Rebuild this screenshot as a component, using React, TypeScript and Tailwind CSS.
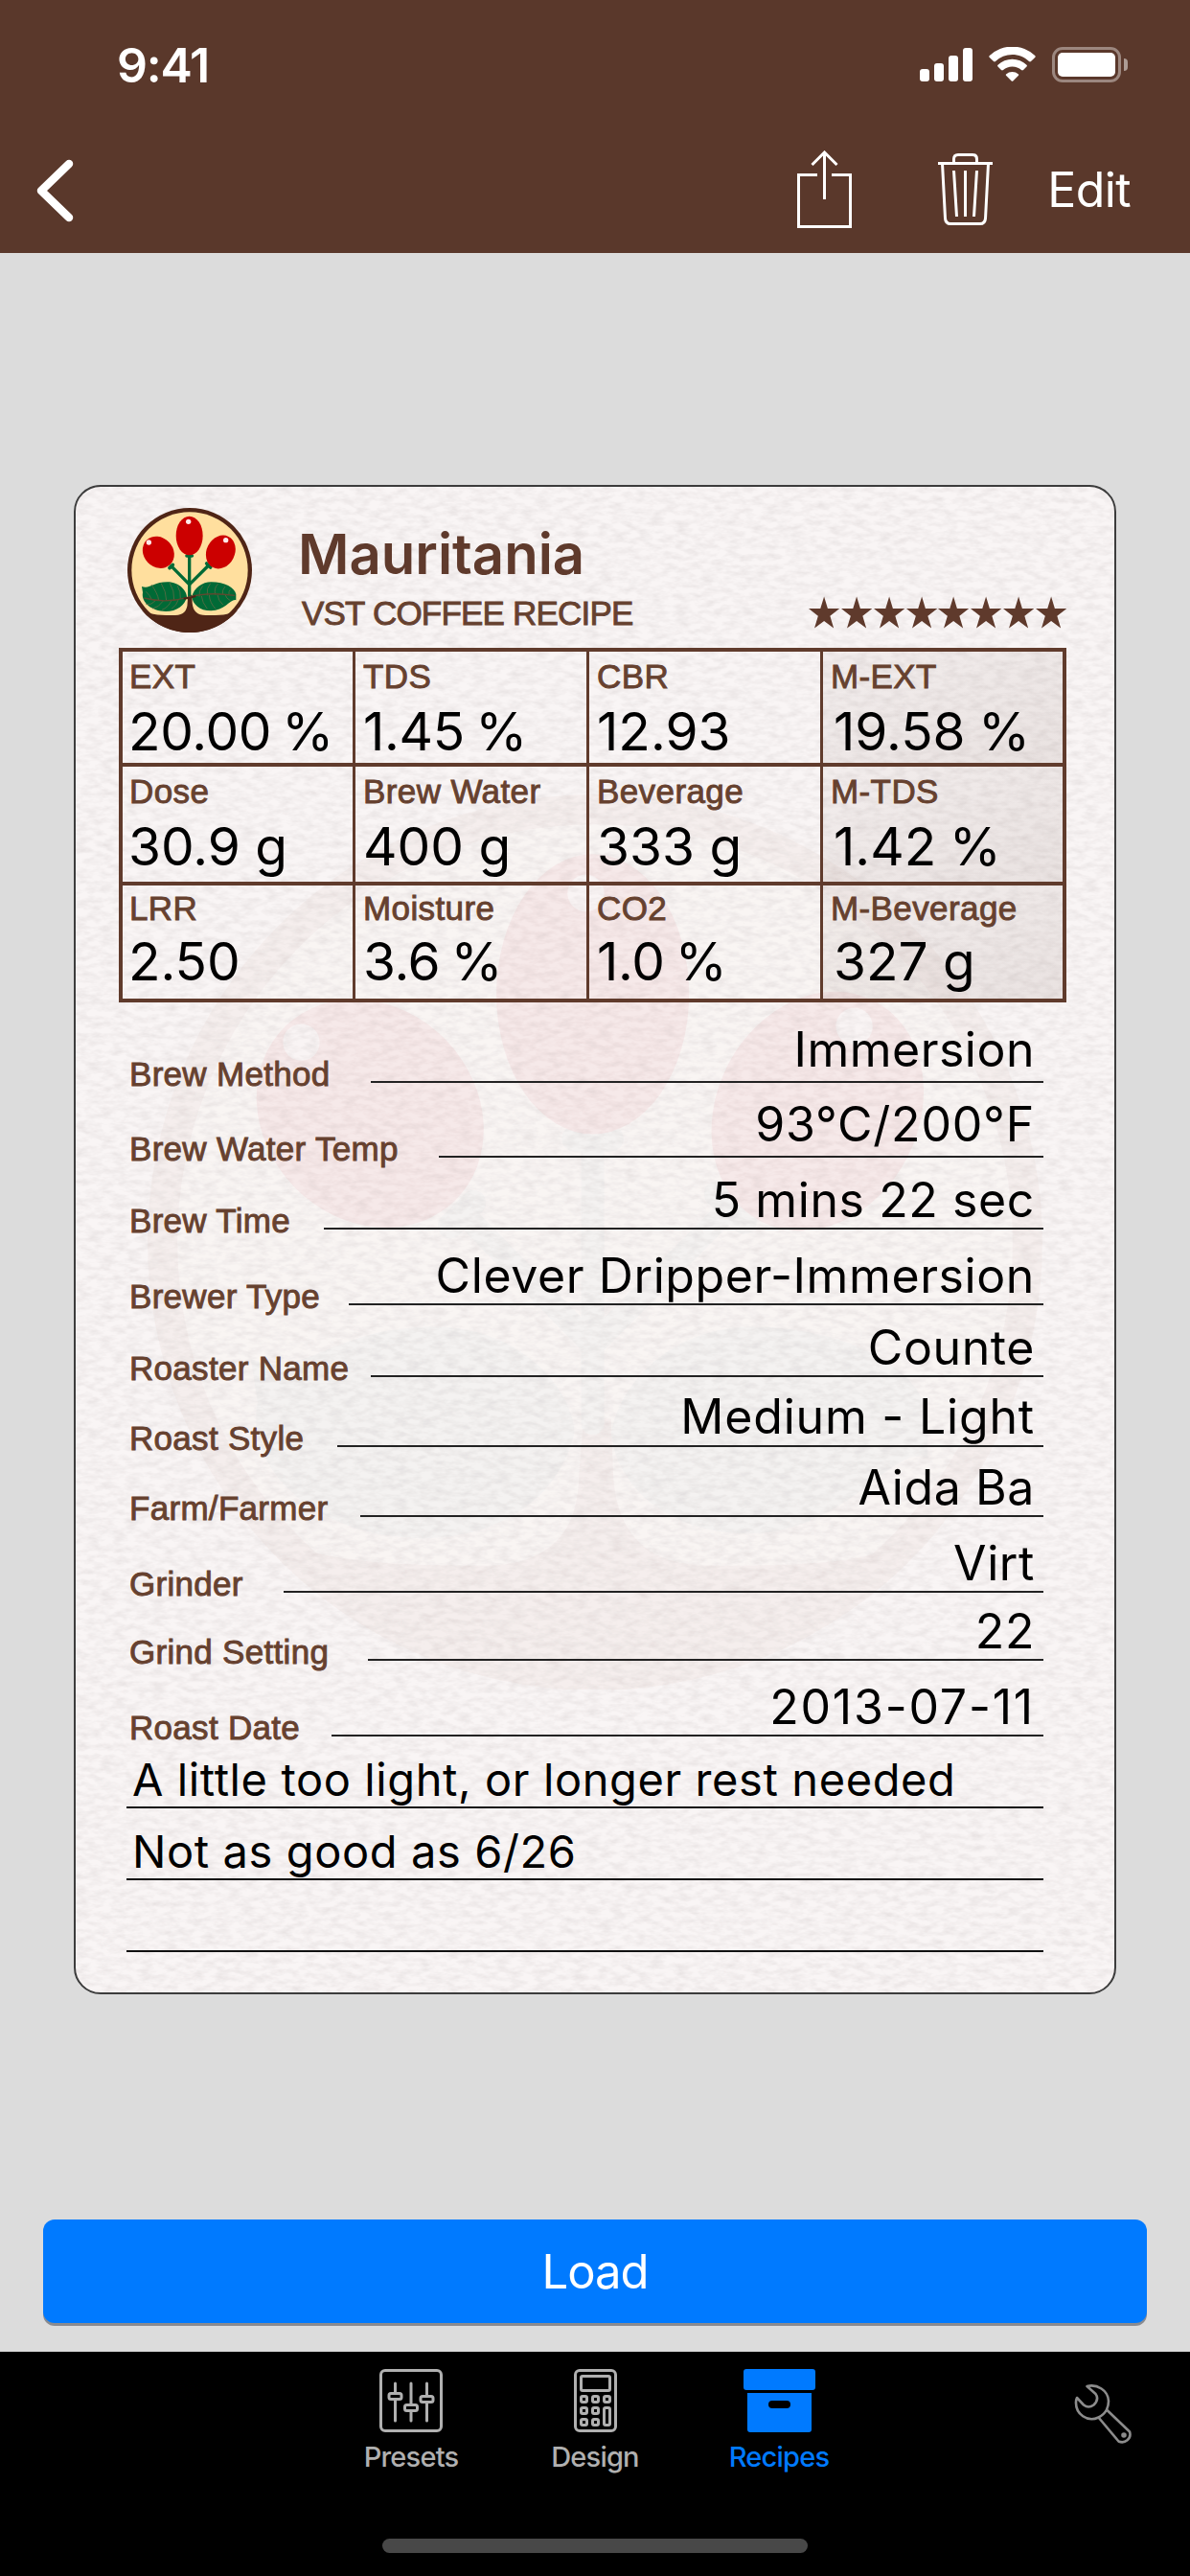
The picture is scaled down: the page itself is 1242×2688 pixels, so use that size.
import type { ReactNode } from 'react';
import clsx from 'clsx';

interface Metric {
  label: string;
  value: string;
}

interface Detail {
  label: string;
  value: string;
  row: string;
  labelWidth: string;
  valueClass?: string;
}

const METRICS: Metric[][] = [
  [
    { label: 'EXT', value: '20.00 %' },
    { label: 'TDS', value: '1.45 %' },
    { label: 'CBR', value: '12.93' },
    { label: 'M-EXT', value: '19.58 %' },
  ],
  [
    { label: 'Dose', value: '30.9 g' },
    { label: 'Brew Water', value: '400 g' },
    { label: 'Beverage', value: '333 g' },
    { label: 'M-TDS', value: '1.42 %' },
  ],
  [
    { label: 'LRR', value: '2.50' },
    { label: 'Moisture', value: '3.6 %' },
    { label: 'CO2', value: '1.0 %' },
    { label: 'M-Beverage', value: '327 g' },
  ],
];

const DETAILS: Detail[] = [
  { label: 'Brew Method', value: 'Immersion', row: 'h-[84px]', labelWidth: 'w-[252px]', valueClass: 'pb-2 tracking-[0.5px]' },
  { label: 'Brew Water Temp', value: '93°C/200°F', row: 'h-[78px]', labelWidth: 'w-[323px]', valueClass: 'pb-2 tracking-[0.800px]' },
  { label: 'Brew Time', value: '5 mins 22 sec', row: 'h-[75px]', labelWidth: 'w-[203px]' },
  { label: 'Brewer Type', value: 'Clever Dripper-Immersion', row: 'h-[79px]', labelWidth: 'w-[229px]' },
  { label: 'Roaster Name', value: 'Counte', row: 'h-[75px]', labelWidth: 'w-[252px]' },
  { label: 'Roast Style', value: 'Medium - Light', row: 'h-[73px]', labelWidth: 'w-[217px]', valueClass: 'pb-[5px] tracking-[0.800px]' },
  { label: 'Farm/Farmer', value: 'Aida Ba', row: 'h-[73px]', labelWidth: 'w-[241px]' },
  { label: 'Grinder', value: 'Virt', row: 'h-[79px]', labelWidth: 'w-[161px]' },
  { label: 'Grind Setting', value: '22', row: 'h-[71px]', labelWidth: 'w-[249px]' },
  { label: 'Roast Date', value: '2013-07-11', row: 'h-[79px]', labelWidth: 'w-[211px]', valueClass: 'pb-1 tracking-[1.800px]' },
];

const NOTES = ['A little too light, or longer rest needed', 'Not as good as 6/26', ''];

const LABEL =
  "font-['Liberation_Sans',Arial,sans-serif] text-[35px] leading-[36px] whitespace-nowrap text-[#66412f] [-webkit-text-stroke:0.9px_#66412f]";

function Logo({ className, faded }: { className?: string; faded?: boolean }) {
  const soil = faded ? '#b0705a' : '#4f2516';
  const green = faded ? '#8fb8aa' : '#006a36';
  return (
    <svg viewBox="0 0 390 390" className={className}>
      <circle cx="195" cy="195" r="195" fill={soil} />
      <circle cx="195" cy="195" r="182" fill={faded ? '#fff6dc' : '#ffdf9e'} />
      <path
        d="M45 320C75 336 110 336 150 336Q188 334 188 296L190 272H202L203 298Q206 336 245 336C290 336 315 336 345 320A195 195 0 0 1 45 320Z"
        fill={soil}
      />
      <g fill="none" stroke={green} strokeLinecap="round">
        <path d="M194 145V274" strokeWidth="10" />
        <path d="M137 182L194 240L254 180" strokeWidth="10" />
        <path d="M186 150H202M132 188L142 178M248 174L260 186" strokeWidth="11" />
      </g>
      <path d="M45 246C70 255 80 232 125 232C165 232 186 262 186 278C180 305 155 324 120 324C75 324 42 295 48 265Z" fill={green} />
      <path d="M340 289C325 282 305 322 262 322C225 322 204 300 202 278C208 250 235 232 262 232C305 232 336 250 340 270Z" fill={green} />
      {!faded && (
        <g fill="none" stroke="#5c6b45" strokeWidth="2.500">
          <path d="M75 240Q95 268 98 289M105 235Q122 262 122 290M132 234Q148 260 146 288M156 242Q168 262 166 285" />
          <path d="M58 262Q72 275 76 287M88 290Q75 305 58 302M112 291Q98 312 78 315M138 289Q128 312 108 319M160 286Q154 306 138 316" />
          <path d="M225 278Q222 260 236 244M250 274Q246 252 260 236M275 272Q270 250 284 238M298 271Q296 256 306 246M318 270Q316 262 322 256" />
          <path d="M232 276Q234 296 250 316M256 273Q258 298 276 316M282 272Q284 290 300 304M306 272Q310 284 322 290" />
          <path d="M52 282Q120 300 188 280Q250 262 336 274" stroke="#5d4a30" strokeWidth="4" />
          <path d="M176 284Q196 282 214 276" stroke={soil} strokeWidth="7" />
        </g>
      )}
      <g fill="#cc0000">
        <ellipse cx="194" cy="87" rx="42" ry="61" />
        <ellipse cx="97" cy="139" rx="46" ry="53" transform="rotate(-44 97 139)" />
        <ellipse cx="292" cy="138" rx="44" ry="54" transform="rotate(27 292 138)" />
      </g>
      <g fill="#ffe9e9">
        <circle cx="191" cy="43" r="8" />
        <circle cx="67" cy="108" r="8" />
        <circle cx="308" cy="101" r="8" />
      </g>
    </svg>
  );
}

function PaperTexture() {
  return (
    <svg className="absolute inset-0 h-full w-full">
      <filter id="paper" x="0" y="0" width="100%" height="100%">
        <feTurbulence type="fractalNoise" baseFrequency="0.075 0.17" numOctaves="3" seed="7" />
        <feColorMatrix values="0 0 0 0 0.45  0 0 0 0 0.4  0 0 0 0 0.4  0.42 0 0 0 -0.15" />
      </filter>
      <rect width="100%" height="100%" filter="url(#paper)" />
    </svg>
  );
}

function StatusBar() {
  return (
    <div className="flex h-[136px] items-start justify-between pr-[65px] pl-[122px]">
      <span className="mt-[43px] text-[50px] leading-[50px] font-semibold tracking-[-1.200px] text-white">9:41</span>
      <div className="mt-[49px] flex h-[37px] items-start">
        <div className="flex h-9 items-end gap-[5px]">
          <i className="h-[13px] w-2.5 rounded-[3px] bg-white" />
          <i className="h-[19px] w-2.5 rounded-[3px] bg-white" />
          <i className="h-[27px] w-2.5 rounded-[3px] bg-white" />
          <i className="h-[35px] w-2.5 rounded-[3px] bg-white" />
        </div>
        <svg viewBox="0 0 49 36" className="ml-[17px] h-9 w-[49px]" fill="#fff">
          <path d="M24.500 8C31 8 37.300 10.500 42 15Q43 15.900 44 15L48.200 11Q49.200 10 48.200 9A34.500 34.500 0 0 0 .8 9Q-.2 10 .8 11L5 15Q6 15.900 7 15A25.300 25.300 0 0 1 24.500 8Z" />
          <path d="M24.500 20.500C28.200 20.500 31.500 21.800 34 24Q35 24.900 36 24L39.500 20.600Q40.500 19.700 39.500 18.700A21.800 21.800 0 0 0 9.500 18.700Q8.500 19.700 9.500 20.600L13 24Q14 24.900 15 24A14.500 14.500 0 0 1 24.500 20.500Z" />
          <path d="M31 28.500Q31.600 29 31 29.700L25.300 35.400Q24.500 36 23.700 35.400L18 29.700Q17.400 29 18 28.500A10 10 0 0 1 31 28.500Z" />
        </svg>
        <div className="ml-[17px] flex h-[37px] w-[72px] rounded-[11px] border-[3px] border-white/40 p-[3px]">
          <div className="flex-1 rounded-[5px] bg-white" />
        </div>
        <i className="mt-3 ml-[3px] h-[13px] w-1 rounded-r-full bg-white/50" />
      </div>
    </div>
  );
}

function NavBar() {
  return (
    <div className="flex h-32 items-start pr-[62px] pl-[38px] text-white">
      <button aria-label="Back" className="mt-[30px]">
        <svg viewBox="0 0 40 66" className="h-[66px] w-10" fill="none" stroke="currentColor" strokeWidth="8.500" strokeLinecap="round" strokeLinejoin="round">
          <path d="M34 5L5 33L34 61" />
        </svg>
      </button>
      <button aria-label="Share" className="mt-[21px] ml-auto">
        <svg viewBox="0 0 57 81" className="h-[81px] w-[57px]" fill="none" stroke="currentColor" strokeWidth="3">
          <path d="M21 25.500H1.500V79.500H55.500V25.500H36M28.500 51V2M15.500 15L28.500 2L41.500 15" />
        </svg>
      </button>
      <button aria-label="Delete" className="mt-6 ml-[90px]">
        <svg viewBox="0 0 57 75" className="h-[75px] w-[57px]" fill="none" stroke="currentColor" strokeWidth="3">
          <path d="M0 10.500H57M16.500 10V6Q16.500 1.500 21 1.500H36Q40.500 1.500 40.500 6V10M4.500 10.500L7.500 68Q8 73.500 13 73.500H44Q49 73.500 49.500 68L52.500 10.500M16.500 18L19.500 66M28.500 18V66M40.500 18L37.500 66" />
        </svg>
      </button>
      <button className="mt-[37px] ml-[57px] text-[50px] leading-[50px] tracking-[-0.600px]">Edit</button>
    </div>
  );
}

function Stars({ count }: { count: number }) {
  return (
    <div className="flex gap-[1.600px]">
      {Array.from({ length: count }, (_, i) => (
        <svg key={i} viewBox="0 0 32 33" className="h-[34px] w-[32.200px]" fill="#5f3a2c">
          <path d="M16 0L19.800 12.500H32L22.200 20.300L26 33L16 25.400L6 33L9.800 20.300L0 12.500H12.200Z" />
        </svg>
      ))}
    </div>
  );
}

function MetricTable() {
  return (
    <div className="mr-[50px] ml-[45px] grid h-[370px] grid-cols-[240px_244px_244px_1fr] grid-rows-[116px_124px_122px] border-4 border-[#603b2c]">
      {METRICS.map((row, r) =>
        row.map((m, c) => (
          <div
            key={m.label}
            className={clsx(
              'border-[#603b2c]',
              r > 0 && 'border-t-4',
              c === 0 ? 'pl-[7px]' : 'border-l-[3px] pl-2',
              r === 2 ? 'pt-1.5' : 'pt-2',
              c === 3 && 'bg-linear-to-br from-[#5a382b]/4 to-[#5a382b]/10',
            )}
          >
            <div className={clsx(LABEL, 'tracking-[0.400px]')}>{m.label}</div>
            <div
              className={clsx(
                'text-[55px] leading-[56px] whitespace-nowrap',
                r === 2 ? 'mt-[9px]' : 'mt-[11px]',
                c === 0 && '-ml-px',
                c === 3 && 'ml-[3px]',
                m.value.includes('%') && (c === 3 ? '[word-spacing:-2px]' : 'tracking-[-0.300px] [word-spacing:-4px]'),
              )}
            >
              {m.value}
            </div>
          </div>
        )),
      )}
    </div>
  );
}

function RecipeCard() {
  return (
    <div className="relative mx-auto h-[1575px] w-[1088px] overflow-hidden rounded-[28px] border-2 border-[#3c3c3c] bg-[#f9f5f5]">
      <PaperTexture />
      <Logo faded className="absolute top-[321px] left-[75px] h-[934px] w-[934px] opacity-[0.045]" />
      <div className="relative">
        <div className="flex h-[168px] items-start pr-[50px] pl-[54px]">
          <Logo className="mt-[22px] h-[130px] w-[130px]" />
          <div className="mt-[41px] ml-12">
            <h1 className="text-[58px] leading-[58px] font-semibold text-[#5f3a2c]">Mauritania</h1>
            <div className={clsx(LABEL, 'mt-[15px] ml-1 tracking-[-0.800px]')}>VST COFFEE RECIPE</div>
          </div>
          <div className="mt-[114px] ml-auto">
            <Stars count={8} />
          </div>
        </div>

        <MetricTable />

        {DETAILS.map((d) => (
          <div key={d.label} className={clsx('flex items-end pr-[74px] pl-[56px]', d.row)}>
            <div className={clsx(LABEL, '-mb-[9px] shrink-0 tracking-[0.300px]', d.labelWidth)}>{d.label}</div>
            <div
              className={clsx(
                'flex-1 border-b-2 border-[#222] pr-[9px] text-right text-[50px] leading-[50px] whitespace-nowrap',
                d.valueClass ?? 'pb-1 tracking-[0.600px]',
              )}
            >
              {d.value}
            </div>
          </div>
        ))}

        {NOTES.map((n, i) => (
          <div
            key={i}
            className="mr-[74px] ml-[53px] flex h-[75px] items-end border-b-2 border-[#111] pb-1 pl-1.5 text-[47px] leading-[48px] tracking-[0.600px] whitespace-nowrap"
          >
            {n}
          </div>
        ))}
      </div>
    </div>
  );
}

function Tab({ label, active, children }: { label: string; active?: boolean; children: ReactNode }) {
  return (
    <button className={clsx('flex w-48 flex-col items-center', active ? 'text-[#007aff]' : 'text-[#b0b0b0]')}>
      {children}
      <span className="mt-[10px] text-[29px] leading-[32px] font-medium tracking-[-0.800px]">{label}</span>
    </button>
  );
}

function TabBar() {
  return (
    <div className="relative flex h-[234px] flex-col items-center bg-black">
      <div className="flex pt-[18px]">
        <Tab label="Presets">
          <svg viewBox="0 0 66 66" className="h-[66px] w-[66px]" fill="none" stroke="currentColor" strokeWidth="3">
            <rect x="1.500" y="1.500" width="63" height="63" rx="4.500" />
            <path d="M16.500 15V25M16.500 33V54M33 15V37M33 45V54M49.500 15V28M49.500 36V54" strokeLinecap="round" />
            <rect x="10" y="25.500" width="13" height="6" rx="2" />
            <rect x="26.500" y="37.500" width="13" height="6" rx="2" />
            <rect x="43" y="28.500" width="13" height="6" rx="2" />
          </svg>
        </Tab>
        <Tab label="Design">
          <svg viewBox="0 0 45 66" className="h-[66px] w-[45px]" fill="none" stroke="currentColor" strokeWidth="3">
            <rect x="1.500" y="1.500" width="42" height="63" rx="4.500" />
            <rect x="7.500" y="7.500" width="30" height="15" rx="1.500" />
            <rect x="7.500" y="28.500" width="6" height="6" rx="1.500" />
            <rect x="19.500" y="28.500" width="6" height="6" rx="1.500" />
            <rect x="31.500" y="28.500" width="6" height="6" rx="1.500" />
            <rect x="7.500" y="40.500" width="6" height="6" rx="1.500" />
            <rect x="19.500" y="40.500" width="6" height="6" rx="1.500" />
            <rect x="31.500" y="40.500" width="6" height="18" rx="1.500" />
            <rect x="7.500" y="52.500" width="6" height="6" rx="1.500" />
            <rect x="19.500" y="52.500" width="6" height="6" rx="1.500" />
          </svg>
        </Tab>
        <Tab label="Recipes" active>
          <svg viewBox="0 0 75 66" className="h-[66px] w-[75px]" fill="currentColor">
            <rect width="75" height="22" rx="3" />
            <path d="M4 25H71V63Q71 66 68 66H7Q4 66 4 63Z" />
            <rect x="26" y="33" width="23" height="8" rx="4" fill="#000" />
          </svg>
        </Tab>
      </div>
      <button aria-label="Settings" className="absolute top-[34px] right-[59px]">
        <svg viewBox="0 0 62 62" className="h-[62px] w-[62px]" fill="none" stroke="#8c8c8c" strokeWidth="2.600" strokeLinejoin="round">
          <path d="M13.500 2C24 -.5 35.500 6 36 17.500Q36 22 34 26.500L58 49.500A8.300 8.300 0 0 1 46.500 59.500L25.500 34.500C14 40 1.500 31 2 18.500Q2 16 3 14L10 21.500Q15 25.500 20.500 21.500Q26.500 15.500 22.500 10ZM34 26.500Q31 32 25.500 34.500" />
          <circle cx="52" cy="53" r="1.500" fill="#8c8c8c" />
        </svg>
      </button>
      <div className="mt-auto mb-6 h-[15px] w-[444px] rounded-full bg-[#484848]" />
    </div>
  );
}

export default function App() {
  return (
    <div className="flex h-[2688px] w-[1242px] flex-col overflow-hidden bg-[#dcdcdc] font-[Inter,'Noto_Sans',sans-serif] text-black">
      <header className="h-[264px] bg-[#5a382b]">
        <StatusBar />
        <NavBar />
      </header>
      <main className="flex-1 px-[45px] pt-[242px]">
        <RecipeCard />
        <button className="mt-[235px] h-[108px] w-full rounded-[12px] bg-[#007aff] pt-0.5 text-[49px] tracking-[-1px] text-white shadow-[0_3px_0_#8a8b90]">
          Load
        </button>
      </main>
      <TabBar />
    </div>
  );
}
